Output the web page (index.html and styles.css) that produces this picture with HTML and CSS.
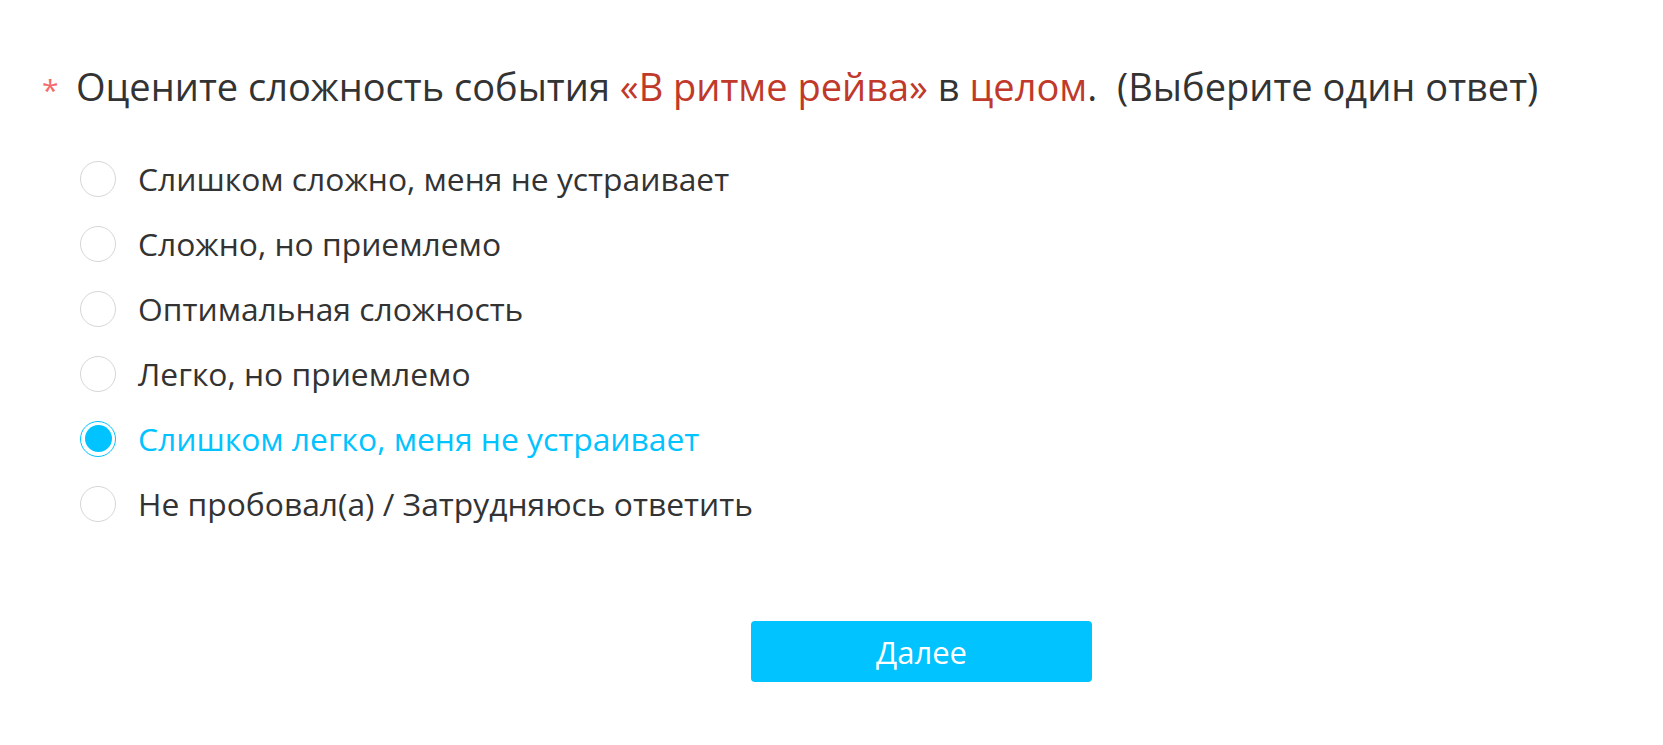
FILE: index.html
```html
<!DOCTYPE html>
<html lang="ru">
<head>
<meta charset="utf-8">
<title>Опрос</title>
<link rel="stylesheet" href="styles.css">
</head>
<body>
<div class="survey">
  <div class="question">
    <span class="req">*</span>
    <span class="qtext">Оцените сложность события <span class="hl">«В ритме рейва»</span> в <span class="hl">целом</span>.</span>
    <span class="hint">(Выберите один ответ)</span>
  </div>
  <ul class="options">
    <li class="option"><span class="radio"></span><span class="label">Слишком сложно, меня не устраивает</span></li>
    <li class="option"><span class="radio"></span><span class="label">Сложно, но приемлемо</span></li>
    <li class="option"><span class="radio"></span><span class="label">Оптимальная сложность</span></li>
    <li class="option"><span class="radio"></span><span class="label">Легко, но приемлемо</span></li>
    <li class="option selected"><span class="radio"></span><span class="label">Слишком легко, меня не устраивает</span></li>
    <li class="option"><span class="radio"></span><span class="label">Не пробовал(а) / Затрудняюсь ответить</span></li>
  </ul>
  <div class="actions">
    <button class="next">Далее</button>
  </div>
</div>
</body>
</html>
```
FILE: styles.css
```css
html, body {
  margin: 0;
  padding: 0;
  background: #ffffff;
}
body {
  font-family: "Open Sans", "Noto Sans", sans-serif;
  color: #333333;
}
.survey {
  padding: 58px 0 0 42px;
}
.question {
  display: flex;
  align-items: baseline;
  font-size: 38px;
  line-height: 56px;
}
.req {
  color: #f26b6b;
  font-size: 30px;
  width: 34px;
}
.hl {
  color: #c0392b;
}
.hint {
  margin-left: 20px;
}
.options {
  list-style: none;
  margin: 28px 0 0 0;
  padding: 0 0 0 38px;
}
.option {
  display: flex;
  align-items: center;
  height: 65px;
  font-size: 31.8px;
}
.radio {
  box-sizing: border-box;
  width: 36px;
  height: 36px;
  border: 1px solid #d6d6d6;
  border-radius: 50%;
  margin-right: 22px;
  flex: none;
  display: flex;
  align-items: center;
  justify-content: center;
}
.selected .radio {
  border-color: #00c3ff;
}
.selected .radio::after {
  content: "";
  width: 27px;
  height: 27px;
  border-radius: 50%;
  background: #00c3ff;
}
.selected .label {
  color: #00c3ff;
}
.actions {
  padding: 85px 0 0 709px;
}
.next {
  width: 341px;
  height: 61px;
  border: none;
  border-radius: 4px;
  background: #00c3ff;
  color: #ffffff;
  font-family: "Open Sans", "Noto Sans", sans-serif;
  font-size: 31px;
  cursor: pointer;
}
```
